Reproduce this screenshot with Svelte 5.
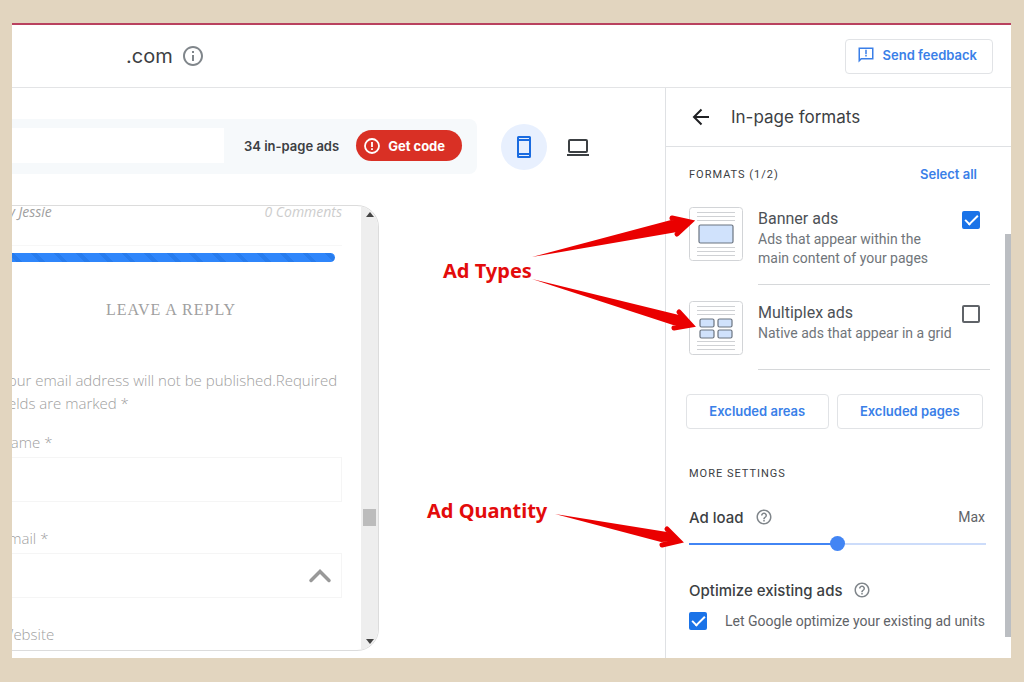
<script>
	let adLoad = $state(50);
	let optimize = $state(true);
	let device = $state('phone');

	let formats = $state([
		{
			id: 'banner',
			title: 'Banner ads',
			text: 'Ads that appear within the main content of your pages',
			boxes: [{ x: 10, y: 18, w: 34, h: 18 }],
			checked: true
		},
		{
			id: 'multiplex',
			title: 'Multiplex ads',
			text: 'Native ads that appear in a grid',
			boxes: [
				{ x: 11, y: 18, w: 14, h: 8 },
				{ x: 29, y: 18, w: 14, h: 8 },
				{ x: 11, y: 29, w: 14, h: 8 },
				{ x: 29, y: 29, w: 14, h: 8 }
			],
			checked: false
		}
	]);

	let selected = $derived(formats.filter((f) => f.checked).length);

	function selectAll() {
		formats.forEach((f) => (f.checked = true));
	}
</script>

{#snippet help()}
	<svg class="help" viewBox="0 0 24 24" width="18" height="18" aria-hidden="true">
		<path
			fill="currentColor"
			d="M11 18h2v-2h-2v2zm1-16C6.480 2 2 6.480 2 12s4.480 10 10 10 10-4.480 10-10S17.520 2 12 2zm0 18c-4.410 0-8-3.590-8-8s3.590-8 8-8 8 3.590 8 8-3.590 8-8 8zm0-14c-2.210 0-4 1.790-4 4h2c0-1.100.9-2 2-2s2 .9 2 2c0 2-3 1.750-3 5h2c0-2.250 3-2.500 3-5 0-2.210-1.790-4-4-4z"
		/>
	</svg>
{/snippet}

<div class="page">
	<div class="shot">
		<header class="topbar">
			<span class="domain">.com</span>
			<svg class="info" viewBox="0 0 24 24" width="24" height="24" aria-hidden="true">
				<path
					fill="currentColor"
					d="M11 7h2v2h-2V7zm0 4h2v6h-2v-6zm1-9C6.480 2 2 6.480 2 12s4.480 10 10 10 10-4.480 10-10S17.520 2 12 2zm0 18c-4.410 0-8-3.590-8-8s3.590-8 8-8 8 3.590 8 8-3.590 8-8 8z"
				/>
			</svg>
			<button class="outlined feedback" type="button">
				<svg viewBox="0 0 24 24" width="18" height="18" aria-hidden="true">
					<path
						fill="currentColor"
						d="M22 2H2v20l4-4h16V2zM20 16H5.200L4 17.200V4h16v12zM11 5h2v6h-2V5zm0 7h2v2h-2v-2z"
					/>
				</svg>
				Send feedback
			</button>
		</header>

		<div class="columns">
			<main class="preview">
				<div class="tools">
					<div class="toolbar">
						<input class="url" type="text" aria-label="Page address" />
						<span class="count">34 in-page ads</span>
						<button class="code" type="button">
							<svg viewBox="0 0 16 16" width="16" height="16" aria-hidden="true">
								<circle cx="8" cy="8" r="7" fill="none" stroke="#fff" stroke-width="1.800" />
								<path d="M8 4v5M8 10.300v1.700" stroke="#fff" stroke-width="1.800" />
							</svg>
							Get code
						</button>
					</div>
					<button
						class="device"
						class:active={device === 'phone'}
						type="button"
						aria-label="Phone preview"
						onclick={() => (device = 'phone')}
					>
						<svg viewBox="0 0 24 24" width="24" height="24" aria-hidden="true">
							<path
								fill="currentColor"
								fill-rule="evenodd"
								d="M6.500 1h11A1.500 1.500 0 0 1 19 2.500v19a1.500 1.500 0 0 1-1.500 1.500h-11A1.500 1.500 0 0 1 5 21.500v-19A1.500 1.500 0 0 1 6.500 1zM7 3v1h10V3zM7 6v12h10V6zM7 20v1h10v-1z"
							/>
						</svg>
					</button>
					<button
						class="device"
						class:active={device === 'desktop'}
						type="button"
						aria-label="Desktop preview"
						onclick={() => (device = 'desktop')}
					>
						<svg viewBox="0 0 24 24" width="24" height="24" aria-hidden="true">
							<rect x="3" y="5" width="18" height="12" rx="1" fill="none" stroke="currentColor" stroke-width="2" />
							<path d="M1 20h22" stroke="currentColor" stroke-width="2" />
						</svg>
					</button>
				</div>

				<div class="frame">
					<div class="blog">
						<div class="meta"><span>By Jessie</span><span class="comments">0 Comments</span></div>
						<div class="stripes"></div>
						<h2>LEAVE A REPLY</h2>
						<p>Your email address will not be published.Required fields are marked *</p>
						<label for="reply-name">Name *</label>
						<input id="reply-name" type="text" />
						<label for="reply-email">Email *</label>
						<input id="reply-email" type="text" />
						<label for="reply-site">Website</label>
						<button class="to-top" type="button" aria-label="Back to top">
							<svg viewBox="0 0 24 16" width="24" height="16" aria-hidden="true">
								<path d="M3 12.500l9-9 9 9" fill="none" stroke="#999" stroke-width="3.500" stroke-linecap="round" />
							</svg>
						</button>
					</div>
					<div class="scrollbar">
						<svg viewBox="0 0 8 5" width="8" height="5" aria-hidden="true"><path d="M0 5l4-5 4 5z" fill="#444" /></svg>
						<span class="thumb"></span>
						<svg viewBox="0 0 8 5" width="8" height="5" aria-hidden="true"><path d="M0 0l4 5 4-5z" fill="#444" /></svg>
					</div>
				</div>
			</main>

			<aside class="settings">
				<div class="settings-head">
					<button class="back" type="button" aria-label="Back">
						<svg viewBox="0 0 24 24" width="24" height="24" aria-hidden="true">
							<path d="M20 12H5M12.500 4.500L5 12l7.500 7.500" fill="none" stroke="#202124" stroke-width="2" />
						</svg>
					</button>
					<h1>In-page formats</h1>
				</div>

				<div class="settings-body">
					<div class="settings-content">
						<div class="row caption-row">
							<span class="caption">FORMATS ({selected}/2)</span>
							<button class="link" type="button" onclick={selectAll}>Select all</button>
						</div>

						{#each formats as format (format.id)}
							<div class="format">
								<svg class="thumbnail" viewBox="0 0 54 54" width="54" height="54" aria-hidden="true">
									<rect x="0.500" y="0.500" width="53" height="53" rx="3" fill="#fff" stroke="#d2d4d7" />
									<path d="M8 5.500h38M8 9.500h38M8 13.500h38M8 40.500h38M8 44.500h38M8 48.500h38" stroke="#cfd1d4" />
									{#each format.boxes as box}
										<rect
											x={box.x}
											y={box.y}
											width={box.w}
											height={box.h}
											rx="1.500"
											fill="#d0e2fc"
											stroke="#6b7480"
											stroke-width="1.200"
										/>
									{/each}
								</svg>
								<div class="format-main">
									<label for={`format-${format.id}`}>
										<strong>{format.title}</strong>
										<span>{format.text}</span>
									</label>
									<input id={`format-${format.id}`} type="checkbox" bind:checked={format.checked} />
								</div>
							</div>
						{/each}

						<div class="excluded">
							<button class="outlined" type="button">Excluded areas</button>
							<button class="outlined" type="button">Excluded pages</button>
						</div>

						<div class="caption more">MORE SETTINGS</div>

						<div class="row">
							<label class="option" for="ad-load">Ad load</label>
							{@render help()}
							<span class="max">Max</span>
						</div>
						<input
							id="ad-load"
							class="slider"
							type="range"
							min="0"
							max="100"
							bind:value={adLoad}
							style={`--load: ${adLoad}%`}
						/>

						<div class="row">
							<span class="option">Optimize existing ads</span>
							{@render help()}
						</div>
						<div class="optimize">
							<input id="optimize" type="checkbox" bind:checked={optimize} />
							<label for="optimize">Let Google optimize your existing ad units</label>
						</div>
					</div>
					<div class="track"></div>
				</div>
			</aside>
		</div>

		<!-- callouts lie over the preview and point into the settings column -->
		<svg class="notes" viewBox="0 0 600 636" width="600" height="636">
			<text x="32" y="255">Ad Types</text>
			<text x="16" y="495">Ad Quantity</text>
			<path d="M121 234L260 197L279 199L266 209Z" />
			<path class="head" d="M261 195L279 199L266 211" />
			<path d="M121 256L268 292L280 302L262 302Z" />
			<path class="head" d="M268 289L280 302L263 305" />
			<path d="M144 491L256 509L268 518L250 519Z" />
			<path class="head" d="M256 506L268 518L251 522" />
		</svg>
	</div>
</div>

<style>
	:global(body) {
		margin: 0;
		background: #e2d5bf;
	}

	.page,
	.page * {
		box-sizing: border-box;
	}

	.page {
		display: flex;
		min-height: 100vh;
		padding: 23px 13px 24px 12px;
		color: #3c4043;
		font-family: Roboto, 'Liberation Sans', sans-serif;
		font-size: 14px;
	}

	.shot {
		position: relative;
		display: flex;
		flex: 1;
		flex-direction: column;
		min-width: 0;
		overflow: hidden;
		border-top: 2px solid #b9415f;
		background: #fff;
	}

	button {
		display: flex;
		align-items: center;
		justify-content: center;
		padding: 0;
		border: 0;
		background: none;
		color: inherit;
		font: inherit;
		cursor: pointer;
	}

	.topbar {
		display: flex;
		align-items: center;
		height: 63px;
		padding: 0 18px 0 114px;
		border-bottom: 1px solid #e3e4e6;
	}

	.domain {
		font-family: Inter, sans-serif;
		font-size: 20px;
	}

	.info {
		margin-left: 8px;
		color: #80868b;
	}

	.outlined {
		height: 35px;
		padding-bottom: 2px;
		border: 1px solid #e1e3e6;
		border-radius: 4px;
		color: #3a7fe8;
		font-family: Inter, sans-serif;
		font-size: 13px;
		font-weight: 600;
	}

	.feedback {
		gap: 8px;
		margin-left: auto;
		padding: 0 15px 2px 11px;
	}

	.columns {
		display: flex;
		flex: 1;
	}

	.preview {
		display: flex;
		flex: 1;
		flex-direction: column;
		min-width: 0;
		padding: 31px 0 7px;
	}

	.tools {
		display: flex;
		align-items: center;
		gap: 8px;
	}

	.toolbar {
		display: flex;
		align-items: center;
		height: 55px;
		margin-right: 16px;
		padding: 0 15px 2px 0;
		border-radius: 0 8px 8px 0;
		background: #f6f9fb;
	}

	.url {
		width: 212px;
		height: 35px;
		border: 0;
		background: #fff;
	}

	.count {
		margin: 0 17px 0 20px;
		font-family: Inter, sans-serif;
		font-size: 13px;
		font-weight: 600;
		white-space: nowrap;
	}

	.code {
		gap: 8px;
		height: 31px;
		padding: 0 17px 0 8px;
		border-radius: 16px;
		background: #d93025;
		color: #fff;
		font-family: Inter, sans-serif;
		font-size: 13px;
		font-weight: 700;
		white-space: nowrap;
	}

	.device {
		width: 46px;
		height: 46px;
		border-radius: 50%;
	}

	.device.active {
		background: #e8f0fe;
		color: #1a6be0;
	}

	.frame {
		display: flex;
		flex: 1;
		width: 397px;
		margin: 31px 0 0 -30px;
		overflow: hidden;
		border: 1px solid #dcdcdc;
		border-radius: 22px;
	}

	.blog {
		position: relative;
		flex: 1;
		padding: 0 19px 0 17px;
		color: #a0a0a0;
		font-family: 'Open Sans', sans-serif;
		font-size: 15px;
		font-weight: 300;
	}

	.meta {
		display: flex;
		justify-content: space-between;
		height: 40px;
		border-bottom: 1px solid #f7f7f7;
		font-size: 14px;
		font-style: italic;
		font-weight: 400;
		line-height: 12px;
	}

	.comments {
		color: #cdcdcd;
	}

	.stripes {
		height: 9px;
		margin: 7px 7px 0 0;
		border-radius: 5px;
		background: repeating-linear-gradient(45deg, #2f86fb 0 12px, #277cee 12px 16px);
	}

	h2 {
		margin: 36px 0 47px;
		font-family: 'Liberation Serif', serif;
		font-size: 16px;
		font-weight: 400;
		letter-spacing: 1px;
		line-height: 24px;
		text-align: center;
	}

	p {
		margin: 0 0 15px;
		line-height: 23px;
	}

	.blog label {
		display: block;
		line-height: 24px;
	}

	.blog input {
		display: block;
		width: 100%;
		height: 45px;
		margin: 3px 0 24px;
		border: 1px solid #f5f5f5;
		background: #fff;
	}

	.to-top {
		position: absolute;
		right: 29px;
		bottom: 66px;
	}

	.scrollbar {
		display: flex;
		flex-direction: column;
		align-items: center;
		width: 17px;
		padding: 6px 0;
		background: #eee;
	}

	.thumb {
		width: 13px;
		height: 17px;
		margin: auto 0 113px;
		background: #bcbcbc;
	}

	.settings {
		display: flex;
		flex-direction: column;
		width: 346px;
		border-left: 1px solid #dfe1e4;
	}

	.settings-head {
		display: flex;
		align-items: center;
		gap: 18px;
		height: 59px;
		padding-left: 23px;
		border-bottom: 1px solid #dfe1e4;
	}

	h1 {
		margin: 0;
		font-family: Inter, sans-serif;
		font-size: 17px;
		font-weight: 400;
	}

	.settings-body {
		display: flex;
		flex: 1;
	}

	.settings-content {
		flex: 1;
		padding: 15px 15px 0 23px;
	}

	.row {
		display: flex;
		align-items: center;
		height: 24px;
		padding-right: 5px;
	}

	.caption-row {
		justify-content: space-between;
		margin-bottom: 21px;
		padding-right: 13px;
	}

	.caption {
		font-size: 11px;
		letter-spacing: 1px;
	}

	.link {
		color: #3a7fe8;
		font-family: Inter, sans-serif;
		font-size: 13px;
		font-weight: 600;
	}

	.format {
		display: flex;
		gap: 15px;
		margin-bottom: 16px;
	}

	.thumbnail {
		flex: none;
	}

	.format-main {
		display: flex;
		flex: 1;
		align-items: flex-start;
		justify-content: space-between;
		height: 78px;
		padding-right: 10px;
		border-bottom: 1px solid #d6d8da;
	}

	.format + .format {
		margin-bottom: 24px;
	}

	.format + .format .format-main {
		height: 69px;
	}

	.format label {
		width: 196px;
		padding-top: 1px;
		color: #70757a;
		line-height: 19px;
	}

	.format label span {
		display: block;
	}

	.format strong {
		display: block;
		color: #4d5156;
		font-size: 16px;
		font-weight: 400;
		line-height: 22px;
	}

	input[type='checkbox'] {
		display: grid;
		flex: none;
		width: 18px;
		height: 18px;
		margin: 0;
		border: 2px solid #5f6368;
		border-radius: 2px;
		appearance: none;
		place-items: center;
	}

	.format input[type='checkbox'] {
		margin-top: 4px;
	}

	input[type='checkbox']:checked {
		border-color: #1a73e8;
		background: #1a73e8;
	}

	input[type='checkbox']:checked::after {
		width: 11px;
		height: 5px;
		margin-bottom: 4px;
		border: solid #fff;
		border-width: 0 0 2px 2px;
		content: '';
		rotate: -45deg;
	}

	.excluded {
		display: flex;
		gap: 8px;
		margin: 0 7px 34px -3px;
	}

	.excluded .outlined {
		flex: auto;
	}

	.more {
		margin-bottom: 20px;
		line-height: 22px;
	}

	.option {
		font-family: Inter, sans-serif;
		font-size: 15px;
		font-weight: 500;
	}

	.help {
		margin-left: 11px;
		color: #80868b;
	}

	.max {
		margin-left: auto;
		color: #5f6368;
	}

	.slider {
		display: block;
		width: 100%;
		height: 15px;
		margin: 7px 0 27px;
		padding-right: 4px;
		background: linear-gradient(90deg, #4285f4 var(--load), #ccdcfa var(--load)) center / 100% 2px no-repeat content-box;
		appearance: none;
	}

	.slider::-webkit-slider-thumb {
		width: 15px;
		height: 15px;
		border-radius: 50%;
		background: #4285f4;
		appearance: none;
	}

	.optimize {
		display: flex;
		align-items: center;
		gap: 18px;
		margin-top: 9px;
		color: #5f6368;
		line-height: 20px;
		white-space: nowrap;
	}

	.track {
		width: 6px;
		margin: 87px 0 21px;
		background: #bbbec2;
	}

	.notes {
		position: absolute;
		top: -2px;
		right: 0;
		fill: #e30b0b;
		font-family: 'Noto Sans', sans-serif;
		font-size: 20px;
		font-weight: 700;
		pointer-events: none;
	}

	.notes path {
		fill: #ea0000;
	}

	.notes .head {
		fill: none;
		stroke: #ea0000;
		stroke-linecap: round;
		stroke-width: 5;
	}
</style>
